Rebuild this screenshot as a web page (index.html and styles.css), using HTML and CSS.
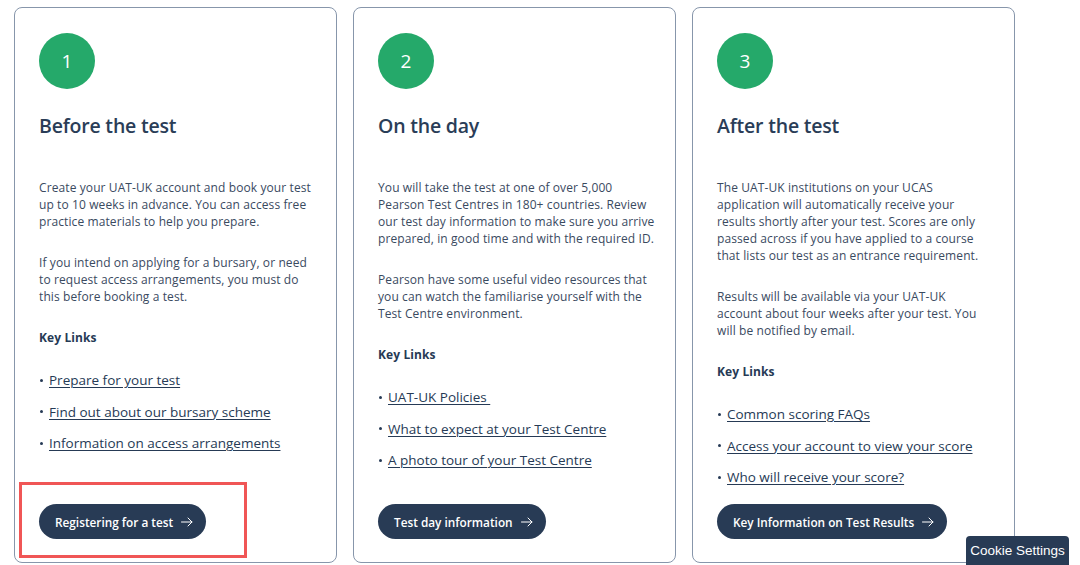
FILE: index.html
```html
<!DOCTYPE html>
<html lang="en">
<head>
    <meta charset="UTF-8">
    <meta name="viewport" content="width=device-width, initial-scale=1.0">
    <title>UAT-UK Test Journey</title>
    <link rel="stylesheet" href="styles.css">
</head>
<body>
    <div class="steps">
        <div class="card">
            <div class="step-number">1</div>
            <h3>Before the test</h3>
            <p>Create your UAT-UK account and book your test up to 10 weeks in advance. You can access free practice materials to help you prepare.</p>
            <p>If you intend on applying for a bursary, or need to request access arrangements, you must do this before booking a test.</p>
            <p class="key-links">Key Links</p>
            <ul>
                <li><a href="#">Prepare for your test</a></li>
                <li><a href="#">Find out about our bursary scheme</a></li>
                <li><a href="#">Information on access arrangements</a></li>
            </ul>
            <div class="action highlighted">
                <a href="#" class="btn">Registering for a test
                    <svg class="arrow" width="12" height="10" viewBox="0 0 12 10"><path d="M0.5 5H11M7 1l4 4-4 4" fill="none" stroke="#fff" stroke-width="1" stroke-linecap="round" stroke-linejoin="round"/></svg>
                </a>
            </div>
        </div>

        <div class="card">
            <div class="step-number">2</div>
            <h3>On the day</h3>
            <p>You will take the test at one of over 5,000 Pearson Test Centres in 180+ countries. Review our test day information to make sure you arrive prepared, in good time and with the required ID.</p>
            <p>Pearson have some useful video resources that you can watch the familiarise yourself with the Test Centre environment.</p>
            <p class="key-links">Key Links</p>
            <ul>
                <li><a href="#">UAT-UK Policies&nbsp;</a></li>
                <li><a href="#">What to expect at your Test Centre</a></li>
                <li><a href="#">A photo tour of your Test Centre</a></li>
            </ul>
            <div class="action">
                <a href="#" class="btn">Test day information
                    <svg class="arrow" width="12" height="10" viewBox="0 0 12 10"><path d="M0.5 5H11M7 1l4 4-4 4" fill="none" stroke="#fff" stroke-width="1" stroke-linecap="round" stroke-linejoin="round"/></svg>
                </a>
            </div>
        </div>

        <div class="card">
            <div class="step-number">3</div>
            <h3>After the test</h3>
            <p>The UAT-UK institutions on your UCAS application will automatically receive your results shortly after your test. Scores are only passed across if you have applied to a course that lists our test as an entrance requirement.</p>
            <p>Results will be available via your UAT-UK account about four weeks after your test. You will be notified by email.</p>
            <p class="key-links">Key Links</p>
            <ul>
                <li><a href="#">Common scoring FAQs</a></li>
                <li><a href="#">Access your account to view your score</a></li>
                <li><a href="#">Who will receive your score?</a></li>
            </ul>
            <div class="action">
                <a href="#" class="btn">Key Information on Test Results
                    <svg class="arrow" width="12" height="10" viewBox="0 0 12 10"><path d="M0.5 5H11M7 1l4 4-4 4" fill="none" stroke="#fff" stroke-width="1" stroke-linecap="round" stroke-linejoin="round"/></svg>
                </a>
            </div>
        </div>
    </div>

    <button class="cookie-settings">Cookie Settings</button>
</body>
</html>
```

FILE: styles.css
```css
* {
    margin: 0;
    padding: 0;
    box-sizing: border-box;
}

body {
    font-family: 'Open Sans', 'Noto Sans', sans-serif;
    background: #fff;
    color: #3a4a5f;
    height: 565px;
    overflow: hidden;
}

.steps {
    display: grid;
    grid-template-columns: repeat(3, 323px);
    gap: 16px;
    padding: 7px 14px 0;
}

.card {
    display: flex;
    flex-direction: column;
    border: 1px solid #8796ab;
    border-radius: 8px;
    padding: 25px 20.5px 23px 24px;
    min-height: 556px;
}

.step-number {
    width: 56px;
    height: 56px;
    border-radius: 50%;
    background: #25a96a;
    color: #fff;
    font-size: 19px;
    display: flex;
    align-items: center;
    justify-content: center;
}

h3 {
    font-size: 19.5px;
    font-weight: 600;
    letter-spacing: -0.2px;
    line-height: 28px;
    color: #2a3d57;
    margin-top: 23px;
    margin-bottom: 39px;
}

p {
    font-size: 12px;
    letter-spacing: 0.1px;
    line-height: 17px;
    margin-bottom: 24px;
    color: #3a4a5f;
}

.key-links {
    font-weight: 700;
    color: #263a55;
    margin-bottom: 24px;
}

ul {
    list-style: none;
}

li {
    font-size: 13.5px;
    line-height: 20px;
    margin-bottom: 11.5px;
    display: flex;
    align-items: center;
}

li::before {
    content: '';
    width: 3px;
    height: 3px;
    border-radius: 50%;
    background: #263a55;
    margin: 0 6px 0 1px;
}

li a {
    color: #263a55;
    text-decoration: underline;
    text-underline-offset: 2px;
    text-decoration-thickness: 1px;
}

.action {
    margin-top: auto;
    padding-top: 4px;
    position: relative;
}

.highlighted::after {
    content: '';
    box-sizing: border-box;
    position: absolute;
    left: -20px;
    top: -18px;
    width: 228px;
    height: 76px;
    border: 3px solid #f05656;
}

.btn {
    display: inline-flex;
    align-items: center;
    height: 35px;
    padding: 0 13px 0 16px;
    border-radius: 18px;
    background: #283b55;
    color: #fff;
    font-size: 11.8px;
    font-weight: 600;
    text-decoration: none;
}

.arrow {
    margin-left: 8px;
}

.cookie-settings {
    position: fixed;
    right: 11px;
    bottom: -4px;
    width: 103px;
    height: 33px;
    padding-bottom: 4px;
    background: #283b55;
    color: #fff;
    border: none;
    border-radius: 4px 4px 0 0;
    font-family: 'Liberation Sans', Arial, sans-serif;
    font-size: 13.5px;
}
```
